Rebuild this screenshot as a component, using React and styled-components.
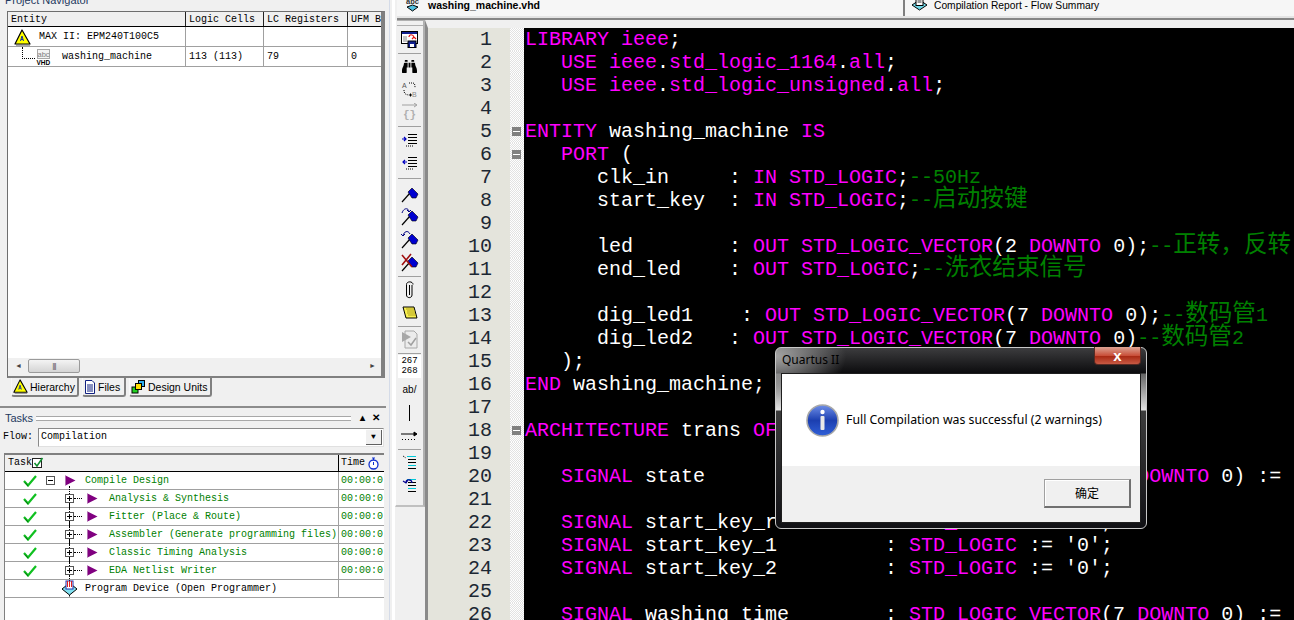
import React from 'react'
import styled, { createGlobalStyle } from 'styled-components'
import { FaBinoculars } from 'react-icons/fa'

const GlobalStyle = createGlobalStyle`
  html, body {
    margin: 0;
    padding: 0;
    background: #f0f0f0;
    overflow: hidden;
  }
  * {
    box-sizing: border-box;
  }
`

const MONO = `'Liberation Mono', 'Noto Sans CJK SC', monospace`
const SANS = `'Liberation Sans', 'Noto Sans CJK SC', sans-serif`

const Page = styled.div`
  position: relative;
  width: 1294px;
  height: 620px;
  overflow: hidden;
  display: grid;
  grid-template-columns: 386px 9px 1fr;
  background: #f0f0f0;
`

/* left column */
const LeftColumn = styled.div`
  display: flex;
  flex-direction: column;
  height: 620px;
  overflow: hidden;
`

const NavTitle = styled.div`
  height: 11px;
  padding-left: 5px;
  font: 11px/14px ${SANS};
  color: #1f3a5f;
  overflow: hidden;

  span {
    display: block;
    margin-top: -7px;
  }
`

const NavBox = styled.div`
  margin-left: 7px;
  width: 378px;
  height: 367px;
  background: #fff;
  border: 1px solid #6e6e6e;
  border-right: 4px solid #808080;
  border-bottom: 2px solid #808080;
  display: flex;
  flex-direction: column;
`

const NavRow = styled.div`
  display: grid;
  grid-template-columns: 178px 78px 84px 1fr;
  height: ${(p) => p.$h}px;
  border-bottom: 1px solid ${(p) => (p.$head ? '#000' : '#a0a0a0')};
  background: ${(p) => (p.$head ? '#f0f0f0' : '#fff')};
  flex: none;
  overflow: hidden;
`

const NavCell = styled.div`
  display: flex;
  align-items: center;
  gap: ${(p) => p.$gap || 0}px;
  padding-left: ${(p) => p.$pad ?? 3}px;
  padding-top: ${(p) => (p.$head ? 2 : 1)}px;
  font: 10px/12px ${MONO};
  color: #000;
  white-space: nowrap;
  overflow: hidden;
  border-right: 1px solid ${(p) => (p.$head ? '#222' : '#a0a0a0')};

  &:last-child {
    border-right: none;
  }
`

const NavSpacer = styled.div`
  flex: 1;
`

const TreeElbow = styled.span`
  width: 13px;
  height: 12px;
  margin-top: -8px;
  border-left: 1px dotted #000;
  border-bottom: 1px dotted #000;
  flex: none;
`

const EntityName = styled.span`
  margin-left: 10px;
`

const ScrollBar = styled.div`
  height: 18px;
  flex: none;
  background: #f0f0f0;
  display: flex;
  align-items: center;
  padding: 0 5px 3px 7px;
  font-size: 7px;
  color: #444;
`

const ScrollThumb = styled.div`
  width: 52px;
  height: 14px;
  margin-left: 6px;
  border: 1px solid #9a9a9a;
  border-radius: 2px;
  background: linear-gradient(180deg, #f4f4f4, #d4d4d4);
  display: flex;
  align-items: center;
  justify-content: center;
  font: 8px/10px ${SANS};
  color: #555;
  letter-spacing: -1px;
`

const ScrollGrow = styled.div`
  flex: 1;
`

const TabRow = styled.div`
  display: flex;
  gap: 3px;
  padding-left: 11px;
  height: 30px;
  flex: none;
  border-bottom: 2px solid #8c8c8c;
`

const PanelTab = styled.div`
  width: ${(p) => p.$w}px;
  height: 19px;
  display: flex;
  align-items: center;
  gap: 2px;
  padding-left: 1px;
  font: 10.5px/14px ${SANS};
  color: #000;
  white-space: nowrap;
  border: 1px solid #f8f8f8;
  border-top: none;
  border-right: 2px solid #808080;
  border-bottom: 2px solid #808080;
  border-radius: 0 0 3px 3px;
`

const TasksHead = styled.div`
  height: 18px;
  flex: none;
  margin-top: 1px;
  display: flex;
  align-items: center;
  padding: 0 4px 0 5px;
  font: 11px/14px ${SANS};
  color: #1f3a5f;
`

const GripLines = styled.div`
  flex: 1;
  height: 5px;
  margin: 0 5px 0 3px;
  border-top: 1px solid #a8a8a8;
  border-bottom: 1px solid #a8a8a8;
  background: #fff;
`

const HeadButton = styled.span`
  width: 13px;
  text-align: center;
  font: bold 10px/12px ${SANS};
  color: #000;
`

const FlowRow = styled.div`
  display: flex;
  align-items: center;
  height: 20px;
  flex: none;
  padding: 0 2px 0 3px;
  font: 10px/12px ${MONO};
`

const FlowLabel = styled.span`
  width: 35px;
  color: #000;
`

const Combo = styled.div`
  flex: 1;
  height: 19px;
  display: flex;
  align-items: center;
  justify-content: space-between;
  padding: 0 1px 0 2px;
  background: #fff;
  border: 1px solid #8a8a8a;
  border-right-color: #e0e0e0;
  border-bottom-color: #e0e0e0;
`

const ComboArrow = styled.span`
  width: 16px;
  height: 15px;
  display: flex;
  align-items: center;
  justify-content: center;
  background: #f0f0f0;
  border-right: 1px solid #606060;
  border-bottom: 1px solid #606060;
  font-size: 8px;
  color: #000;
`

const TaskTable = styled.div`
  margin: 6px 2px 0 4px;
  flex: 1;
  background: #fff;
  border-left: 1px solid #808080;
  border-top: 2px solid #808080;
`

const TaskRow = styled.div`
  display: grid;
  grid-template-columns: 334px 1fr;
  height: ${(p) => (p.$head ? 17 : 18)}px;
  border-bottom: 1px solid ${(p) => (p.$head ? '#000' : '#a0a0a0')};
  background: ${(p) => (p.$head ? '#f0f0f0' : '#fff')};
`

const TaskName = styled.div`
  position: relative;
  display: flex;
  align-items: center;
  padding-left: ${(p) => p.$pad ?? 0}px;
  font: 10px/12px ${MONO};
  color: ${(p) => p.$color || '#000'};
  white-space: nowrap;
  border-right: 1px solid ${(p) => (p.$head ? '#000' : '#a0a0a0')};
`

const TaskLabel = styled.span`
  margin-left: ${(p) => p.$left}px;
`

const TaskTime = styled.div`
  display: flex;
  align-items: center;
  gap: ${(p) => p.$gap || 0}px;
  padding-left: 2px;
  font: 10px/12px ${MONO};
  color: ${(p) => p.$color || '#000'};
  overflow: hidden;
  white-space: nowrap;
`

const Slot = styled.span`
  width: ${(p) => p.$w}px;
  flex: none;
  display: flex;
  align-items: center;
  justify-content: center;
`

const TreeBox = styled.span`
  position: relative;
  width: 9px;
  height: 9px;
  flex: none;
  margin-left: ${(p) => p.$left || 0}px;
  border: 1px solid #555;
  background: #fff;

  &::before {
    content: '';
    position: absolute;
    left: 1px;
    right: 1px;
    top: 3px;
    height: 1px;
    background: #000;
  }

  &::after {
    content: '';
    display: ${(p) => (p.$plus ? 'block' : 'none')};
    position: absolute;
    top: 1px;
    bottom: 1px;
    left: 3px;
    width: 1px;
    background: #000;
  }
`

const TreeDots = styled.span`
  width: 8px;
  height: 1px;
  flex: none;
  margin-right: 5px;
  border-top: 1px dotted #000;
`

const TreeTrunk = styled.span`
  position: absolute;
  left: 64px;
  top: -4px;
  height: 8px;
  border-left: 1px dotted #000;

  & + & {
    top: 13px;
    height: 6px;
  }
`

/* splitter between left column and editor */
const Splitter = styled.div`
  background: #f0f0f0;
  border-right: 3px solid #fff;
  position: relative;

  &::after {
    content: '';
    display: block;
    width: 1px;
    height: 620px;
    margin-left: 3px;
    background: #d4dbe8;
  }
`

/* right column */
const RightColumn = styled.div`
  display: flex;
  flex-direction: column;
  height: 620px;
  overflow: hidden;
`

const TabBar = styled.div`
  height: 20px;
  flex: none;
  display: flex;
  margin-left: 2px;
  background: #f6f6f6;
  border-bottom: 2px solid #858585;
  box-shadow: inset 0 -2px 0 #e4e4e4;
`

const FileTab = styled.div`
  width: ${(p) => p.$w}px;
  height: ${(p) => (p.$active ? 16 : 16)}px;
  flex: none;
  display: flex;
  align-items: flex-start;
  gap: ${(p) => p.$gap}px;
  padding-left: ${(p) => p.$pad}px;
  font: ${(p) => (p.$active ? 'bold 10.5px' : '10.25px')}/11px ${SANS};
  color: #000;
  border-right: ${(p) => (p.$active ? '2px solid #808080' : 'none')};
  white-space: nowrap;
  overflow: hidden;

  svg {
    flex: none;
    margin-top: -3px;
  }
`

const Work = styled.div`
  flex: 1;
  display: flex;
  min-height: 0;
`

const ToolBar = styled.div`
  width: 30px;
  flex: none;
  height: 487px;
  background: #f0f0f0;
  border-right: 2px solid #b0b0b0;
  border-bottom: 2px solid #c0c0c0;
  border-left: 1px solid #fff;
  display: flex;
  flex-direction: column;
  align-items: center;
`

const ToolGrip = styled.div`
  width: 26px;
  height: 6px;
  margin-bottom: 2px;
  border-top: 1px solid #b0b0b0;
  border-bottom: 1px solid #b0b0b0;
  flex: none;
`

const Tool = styled.div`
  width: 24px;
  height: 23px;
  flex: none;
  display: flex;
  align-items: center;
  justify-content: center;
  color: #000;
`

const ToolSep = styled.div`
  width: 23px;
  height: ${(p) => (p.$wide ? 8 : 4)}px;
  flex: none;
  display: flex;
  align-items: center;

  &::after {
    content: '';
    width: 100%;
    height: 1px;
    background: #a0a0a0;
  }
`

const LineCount = styled.div`
  width: 23px;
  height: 23px;
  flex: none;
  background: #fff;
  font: 9px/10px ${MONO};
  color: #000;
  text-align: center;
  padding-top: 1px;
`

const AbLabel = styled.span`
  font: 10px/12px ${SANS};
  color: #000;
`

const Editor = styled.div`
  flex: 1;
  min-width: 0;
  background: #000;
  border-left: 3px solid #8a8a8a;
  border-top: 8px solid #f0f0f0;
  overflow: hidden;
`

const CodeRow = styled.div`
  display: grid;
  grid-template-columns: 82px 14px 1fr;
  height: 23px;
`

const LineNumber = styled.div`
  background: #e4e4dc;
  padding-right: 18px;
  text-align: right;
  font: 20px/23px ${MONO};
  color: #1c2733;
`

const FoldCell = styled.div`
  display: flex;
  align-items: center;
  justify-content: center;
  padding-right: 1px;
  background: repeating-conic-gradient(#fff 0 25%, #e2e2e2 0 50%) 0 0 / 2px 2px;
`

const FoldBox = styled.span`
  width: 9px;
  height: 9px;
  background: #808080;
  display: flex;
  align-items: center;
  justify-content: center;

  &::after {
    content: '';
    width: 7px;
    height: 1px;
    background: #fff;
  }
`

const CodeText = styled.div`
  padding-left: 1px;
  font: 20px/23px ${MONO};
  color: #fff;
  white-space: pre;
`

const Keyword = styled.span`
  color: #ff00ff;
`

const Comment = styled.span`
  color: #008000;
`

const Cjk = styled.span`
  font-size: 23.6px;
  line-height: 20px;
`

/* dialog on top of the editor */
const Dialog = styled.div`
  position: absolute;
  left: 775px;
  top: 347px;
  width: 372px;
  height: 182px;
  padding: 0 5px 5px;
  display: flex;
  flex-direction: column;
  border: 1px solid #c8c8c8;
  border-radius: 6px;
  background:
    radial-gradient(ellipse 70px 45px at 0 8px, #a4a4a4 0, rgba(164, 164, 164, 0) 100%),
    linear-gradient(180deg, #3c3c3e 0, #0c0c0e 25px, #666 26px, #e4e4e4 62px, #3c3c3c 63px, #101014 100%);
`

const DialogTitle = styled.div`
  height: 25px;
  flex: none;
  display: flex;
  justify-content: space-between;
  font: 12px/24px 'Noto Sans', ${SANS};
  color: #000;
  padding-left: 1px;
`

const CloseButton = styled.div`
  width: 47px;
  height: 18px;
  margin-top: -1px;
  display: flex;
  align-items: center;
  justify-content: center;
  border: 1px solid #5a2a22;
  border-top: none;
  border-radius: 0 0 4px 4px;
  background: linear-gradient(180deg, #dca394 0, #c9503a 50%, #a92a14 55%, #c85a44 100%);
  font: bold 15px/16px ${SANS};
  color: #fff;
`

const DialogBody = styled.div`
  flex: 1;
  display: flex;
  flex-direction: column;
  background: #f0f0f0;
  border: 1px solid #1e1e1e;
`

const DialogMessage = styled.div`
  height: 92px;
  flex: none;
  background: #fff;
  display: flex;
  align-items: center;
  gap: 7px;
  padding-left: 24px;
  font: 12.3px/16px 'Noto Sans', ${SANS};
  color: #000;
`

const DialogFoot = styled.div`
  flex: 1;
  display: flex;
  justify-content: flex-end;
  padding: 13px 9px 0 0;
`

const OkButton = styled.div`
  width: 87px;
  height: 29px;
  display: flex;
  align-items: center;
  justify-content: center;
  background: #f0f0f0;
  border: 1px solid #a0a0a0;
  border-right: 2px solid #707070;
  border-bottom: 2px solid #707070;
  box-shadow: inset 1px 1px 0 #fff;
  font: 12px/16px 'Noto Sans CJK SC', sans-serif;
  color: #000;
`

const CODE_LINES = [
  '{LIBRARY ieee};',
  '   {USE ieee}.{std_logic_1164}.{all};',
  '   {USE ieee}.{std_logic_unsigned}.{all};',
  '',
  '{ENTITY} washing_machine {IS}',
  '   {PORT} (',
  '      clk_in     : {IN STD_LOGIC};[--50Hz]',
  '      start_key  : {IN STD_LOGIC};[--启动按键]',
  '',
  '      led        : {OUT STD_LOGIC_VECTOR}(2 {DOWNTO} 0);[--正转，反转]',
  '      end_led    : {OUT STD_LOGIC};[--洗衣结束信号]',
  '',
  '      dig_led1    : {OUT STD_LOGIC_VECTOR}(7 {DOWNTO} 0);[--数码管1]',
  '      dig_led2   : {OUT STD_LOGIC_VECTOR}(7 {DOWNTO} 0)[--数码管2]',
  '   );',
  '{END} washing_machine;',
  '',
  '{ARCHITECTURE} trans {OF} washing_machine {IS}',
  '',
  '   {SIGNAL} state               : {STD_LOGIC_VECTOR}(7 {DOWNTO} 0) := ',
  '',
  "   {SIGNAL} start_key_r         : {STD_LOGIC} := '0';",
  "   {SIGNAL} start_key_1         : {STD_LOGIC} := '0';",
  "   {SIGNAL} start_key_2         : {STD_LOGIC} := '0';",
  '',
  '   {SIGNAL} washing_time        : {STD_LOGIC_VECTOR}(7 {DOWNTO} 0) := ',
]

const FOLD_LINES = [5, 6, 18]

const SUB_TASKS = [
  'Analysis & Synthesis',
  'Fitter (Place & Route)',
  'Assembler (Generate programming files)',
  'Classic Timing Analysis',
  'EDA Netlist Writer',
]

const splitCjk = (text) =>
  text.split(/([\u3000-\u9fff\uff00-\uffef]+)/).map((part, i) =>
    /[\u3000-\u9fff\uff00-\uffef]/.test(part) ? <Cjk key={i}>{part}</Cjk> : part
  )

const renderCode = (line) =>
  line.split(/(\{[^}]*\}|\[[^\]]*\])/).map((part, i) => {
    if (part.startsWith('{')) return <Keyword key={i}>{part.slice(1, -1)}</Keyword>
    if (part.startsWith('[')) return <Comment key={i}>{splitCjk(part.slice(1, -1))}</Comment>
    return part
  })

const Warning = ({ size = 17 }) => (
  <svg width={size} height={size} viewBox="0 0 17 17">
    <path d="M8 1 L16 15 H1 Z" fill="#ffff00" stroke="#000" strokeWidth="1.2" strokeLinejoin="round" />
    <path d="M2 16 H16" stroke="#555" strokeWidth="1" />
    <path d="M6.5 12 L8 7 L9.5 12 M7 10.5 H9" stroke="#1030a0" strokeWidth="1" fill="none" />
  </svg>
)

const VhdIcon = () => (
  <svg width="15" height="17" viewBox="0 0 15 17">
    <rect x="1.5" y="0.5" width="12" height="9" fill="#f4f4f4" stroke="#a8a8a8" />
    <text x="1.5" y="8" fontFamily="Liberation Sans" fontSize="7.5" fill="#808080">abc</text>
    <text x="0.5" y="16" fontFamily="Liberation Sans" fontWeight="bold" fontSize="6.5" fill="#000">VHD</text>
  </svg>
)

const Check = () => (
  <svg width="14" height="12" viewBox="0 0 14 12">
    <path d="M1 6 L5 10.5 L13 1" fill="none" stroke="#10c020" strokeWidth="2.2" />
    <path d="M2 7.5 L5 11" fill="none" stroke="#067010" strokeWidth="1" />
  </svg>
)

const PlayMark = () => (
  <svg width="11" height="11" viewBox="0 0 11 11">
    <path d="M0.5 0.5 L10.5 5.5 L0.5 10.5 Z" fill="#800080" />
    <path d="M0.5 0.5 V10.5" stroke="#b070b0" strokeWidth="1" />
  </svg>
)

const ProgrammerIcon = () => (
  <svg width="17" height="17" viewBox="0 0 17 17">
    <path d="M8.5 3 L16 9 L8.5 15 L1 9 Z" fill="#80e0f0" stroke="#000" strokeWidth="1" />
    <rect x="5" y="1" width="7" height="8" fill="#fff" stroke="#2030b0" />
    <path d="M6.5 1 V7 M8.5 1 V7 M10.5 1 V7" stroke="#e02020" strokeWidth="1" />
    <path d="M8.5 15 V16.5" stroke="#000" />
  </svg>
)

const ReportIcon = () => (
  <svg width="17" height="15" viewBox="0 0 17 15">
    <path d="M8.5 3 L16 8 L8.5 13 L1 8 Z" fill="#70d8e8" stroke="#000" />
    <rect x="5" y="0.5" width="7" height="8" fill="#fff" stroke="#000" />
    <path d="M6.5 3 H10.5 M6.5 5 H10.5" stroke="#333" />
  </svg>
)

const AbcTabIcon = () => (
  <svg width="15" height="15" viewBox="0 0 15 15">
    <path d="M7.5 8 L13 10 L7.5 14 L2 10 Z" fill="#50c0e0" stroke="#000" />
    <text x="1" y="7" fontFamily="Liberation Sans" fontSize="7.5" fill="#333">abc</text>
  </svg>
)

const FilesIcon = () => (
  <svg width="12" height="14" viewBox="0 0 12 14">
    <path d="M1.5 0.5 H8 L10.5 3 V13.5 H1.5 Z" fill="#fff" stroke="#102080" />
    <path d="M3 5 H9 M3 7 H9 M3 9 H9 M3 11 H9" stroke="#102080" />
  </svg>
)

const UnitsIcon = () => (
  <svg width="15" height="14" viewBox="0 0 15 14">
    <rect x="7.5" y="0.5" width="6" height="6" fill="#30b0f0" stroke="#000" />
    <rect x="1" y="7" width="6" height="6" fill="#20d020" stroke="#000" />
    <rect x="4.5" y="3.5" width="6" height="6" fill="#ffe000" stroke="#000" />
  </svg>
)

const TaskBox = () => (
  <svg width="12" height="12" viewBox="0 0 12 12">
    <rect x="0.5" y="1.5" width="9" height="9" fill="#fff" stroke="#222" />
    <path d="M2.5 6 L5 9 L10.5 1" fill="none" stroke="#109030" strokeWidth="1.6" />
  </svg>
)

const Stopwatch = () => (
  <svg width="11" height="13" viewBox="0 0 11 13">
    <circle cx="5.5" cy="7.5" r="4.5" fill="#fff" stroke="#1030d0" strokeWidth="1.3" />
    <path d="M5.5 5 V8 M4 1 H7 M5.5 1 V3" stroke="#1030d0" />
  </svg>
)

const CompileTool = () => (
  <svg width="17" height="17" viewBox="0 0 17 17">
    <rect x="0.5" y="0.5" width="16" height="12" fill="#fff" stroke="#000" />
    <rect x="1" y="1" width="15" height="2" fill="#102090" />
    <path d="M2 6 H6 M2 8 H6 M2 10 H6" stroke="#888" />
    <path d="M8 6 C8 3 12 3 13 6 M11 8 L13 6 L15 8" fill="none" stroke="#e01010" strokeWidth="1.2" />
    <rect x="7" y="10" width="8" height="6.5" fill="#102090" stroke="#000" />
    <rect x="9" y="13" width="4" height="3" fill="#fff" />
  </svg>
)

const SwapTool = () => (
  <svg width="18" height="17" viewBox="0 0 18 17">
    <text x="1" y="7" fontFamily="Liberation Sans" fontSize="7" fill="#555">A</text>
    <text x="11" y="16" fontFamily="Liberation Sans" fontSize="7" fill="#888">B</text>
    <path d="M3 9 C3 13 5 14 9 14 M8 2 H12 C14 2 14 5 14 7" fill="none" stroke="#000" strokeDasharray="1 1" />
    <path d="M9 12 L11 14 L9 16 Z" fill="#000" />
  </svg>
)

const BraceTool = () => (
  <svg width="18" height="19" viewBox="0 0 18 19">
    <path d="M1 2 H15 M13 0 L16 2 L13 4" fill="none" stroke="#a0a0a0" />
    <text x="2" y="15" fontFamily="Liberation Mono" fontSize="11" fontWeight="bold" fill="#b0b0b0">{'{}'}</text>
  </svg>
)

const IndentTool = ({ out }) => (
  <svg width="16" height="14" viewBox="0 0 16 14">
    <path d="M6 1.5 H15 M6 4.5 H15 M6 7.5 H15 M6 10.5 H15" stroke="#000" strokeWidth="1.2" />
    <path d="M4 13 H12" stroke="#000" strokeDasharray="1 1" />
    {out ? (
      <path d="M5 6 H1 M3 4 L1 6 L3 8" fill="none" stroke="#0000c0" strokeWidth="1.2" />
    ) : (
      <path d="M0 6 H4 M2 4 L4 6 L2 8" fill="none" stroke="#0000c0" strokeWidth="1.2" />
    )}
  </svg>
)

const FlagTool = ({ mark }) => (
  <svg width="18" height="19" viewBox="0 0 18 19">
    <path d="M1 18 L9 9" stroke="#000" strokeWidth="1.2" />
    <path d="M7 8 L11 4 L17 10 L15 14 L11 14 Z" fill="#0000d0" stroke="#000" strokeWidth="0.6" />
    {mark === 'next' && <path d="M1 6 C3 0 8 1 8 5 M6 3 L8 5 L10 3" fill="none" stroke="#000080" />}
    {mark === 'prev' && <path d="M9 4 C7 0 3 1 2 6 M0 4 L2 6 L4 4" fill="none" stroke="#000080" />}
    {mark === 'clear' && <path d="M1 2 L11 14 M10 1 L1 12" stroke="#a01010" strokeWidth="1.6" />}
  </svg>
)

const ClipTool = () => (
  <svg width="10" height="18" viewBox="0 0 10 18">
    <path d="M7 4 V14 C7 17.5 1.5 17.5 1.5 14 V3.5 C1.5 0 8 0 8 3.5" fill="none" stroke="#000" />
    <path d="M4.5 4 V14" stroke="#000" />
  </svg>
)

const ScrollTool = () => (
  <svg width="16" height="14" viewBox="0 0 16 14">
    <path d="M1 1 H12 L15 12 H4 Z" fill="#f8f050" stroke="#000" />
    <path d="M4 3 H12 M5 5 H13 M5 7 H13 M6 9 H14" stroke="#b0a020" />
  </svg>
)

const PageTool = () => (
  <svg width="17" height="19" viewBox="0 0 17 19">
    <path d="M4 1 H13 L16 4 V18 H4 Z" fill="#ececec" stroke="#a8a8a8" />
    <path d="M1 2 L10 7 L1 12 Z" fill="#a8a8a8" />
    <path d="M7 12 L10 15 L15 8" fill="none" stroke="#a0a0a0" strokeWidth="1.5" />
  </svg>
)

const ArrowTool = () => (
  <svg width="17" height="11" viewBox="0 0 17 11">
    <path d="M0 4 H15 M13 2 L16 4 L13 6 Z" fill="#000" stroke="#000" />
    <path d="M1 9.5 H16" stroke="#000" strokeDasharray="1 2" />
  </svg>
)

const ListTool = ({ back }) => (
  <svg width="16" height="15" viewBox="0 0 16 15">
    <path d="M5 1.5 H14" stroke="#00c8d8" />
    <path d="M6 4.5 H14 M6 7.5 H14" stroke="#000" />
    <path d="M6 10.5 H14" stroke="#00c8d8" />
    <path d="M6 13.5 H14" stroke="#000" />
    {back ? (
      <path d="M4 4 C4 1 10 1 10 5 M1 3 L4 5 L6 2" fill="none" stroke="#000090" strokeWidth="1.2" />
    ) : (
      <path d="M1 1 L4 3" stroke="#000" strokeDasharray="1 1" />
    )}
  </svg>
)

const InfoIcon = () => (
  <svg width="33" height="33" viewBox="0 0 33 33">
    <defs>
      <linearGradient id="infoBlue" x1="0" y1="0" x2="0" y2="1">
        <stop offset="0" stopColor="#6f8fe8" />
        <stop offset="0.5" stopColor="#1c3fb0" />
        <stop offset="1" stopColor="#3060d8" />
      </linearGradient>
    </defs>
    <circle cx="16.5" cy="16.5" r="15.5" fill="url(#infoBlue)" stroke="#a8a8a8" strokeWidth="1.6" />
    <circle cx="16.5" cy="8" r="2.2" fill="#fff" />
    <rect x="14.5" y="12" width="4" height="14" rx="1" fill="#e8e8e8" />
  </svg>
)

function App() {
  return (
    <Page>
      <GlobalStyle />

      <LeftColumn>
        <NavTitle><span>Project Navigator</span></NavTitle>
        <NavBox>
          <NavRow $head $h={15}>
            <NavCell $head>Entity</NavCell>
            <NavCell $head>Logic Cells</NavCell>
            <NavCell $head>LC Registers</NavCell>
            <NavCell $head>UFM B</NavCell>
          </NavRow>
          <NavRow $h={20}>
            <NavCell $pad={6} $gap={8}><Warning />MAX II: EPM240T100C5</NavCell>
            <NavCell />
            <NavCell />
            <NavCell />
          </NavRow>
          <NavRow $h={20}>
            <NavCell $pad={14} $gap={1}>
              <TreeElbow />
              <VhdIcon />
              <EntityName>washing_machine</EntityName>
            </NavCell>
            <NavCell>113 (113)</NavCell>
            <NavCell>79</NavCell>
            <NavCell>0</NavCell>
          </NavRow>
          <NavSpacer />
          <ScrollBar>
            ◄
            <ScrollThumb>|||</ScrollThumb>
            <ScrollGrow />
            ►
          </ScrollBar>
        </NavBox>

        <TabRow>
          <PanelTab $w={68}><Warning size={15} />Hierarchy</PanelTab>
          <PanelTab $w={44}><FilesIcon />Files</PanelTab>
          <PanelTab $w={83}><UnitsIcon />Design Units</PanelTab>
        </TabRow>

        <TasksHead>
          Tasks
          <GripLines />
          <HeadButton>▴</HeadButton>
          <HeadButton>✕</HeadButton>
        </TasksHead>

        <FlowRow>
          <FlowLabel>Flow:</FlowLabel>
          <Combo>
            Compilation
            <ComboArrow>▼</ComboArrow>
          </Combo>
        </FlowRow>

        <TaskTable>
          <TaskRow $head>
            <TaskName $head $pad={3}>Task<TaskBox /></TaskName>
            <TaskTime $gap={3}>Time<Stopwatch /></TaskTime>
          </TaskRow>
          <TaskRow>
            <TaskName $color="#008000">
              <Slot $w={50}><Check /></Slot>
              <TreeBox $left={-9} />
              <Slot $w={30}><PlayMark /></Slot>
              Compile Design
            </TaskName>
            <TaskTime $color="#008000">00:00:0</TaskTime>
          </TaskRow>
          {SUB_TASKS.map((task) => (
            <TaskRow key={task}>
              <TaskName $color="#008000">
                <TreeTrunk />
                <TreeTrunk />
                <Slot $w={50}><Check /></Slot>
                <TreeBox $left={10} $plus />
                <TreeDots />
                <PlayMark />
                <TaskLabel $left={11}>{task}</TaskLabel>
              </TaskName>
              <TaskTime $color="#008000">00:00:0</TaskTime>
            </TaskRow>
          ))}
          <TaskRow>
            <TaskName>
              <Slot $w={56} />
              <ProgrammerIcon />
              <TaskLabel $left={7}>Program Device (Open Programmer)</TaskLabel>
            </TaskName>
            <TaskTime />
          </TaskRow>
        </TaskTable>
      </LeftColumn>

      <Splitter />

      <RightColumn>
        <TabBar>
          <FileTab $active $w={508} $pad={8} $gap={8}>
            <AbcTabIcon />
            washing_machine.vhd
          </FileTab>
          <FileTab $w={300} $pad={6} $gap={6}>
            <ReportIcon />
            Compilation Report - Flow Summary
          </FileTab>
        </TabBar>

        <Work>
          <ToolBar>
            <ToolGrip />
            <Tool><CompileTool /></Tool>
            <ToolSep />
            <Tool><FaBinoculars size={15} /></Tool>
            <Tool><SwapTool /></Tool>
            <Tool><BraceTool /></Tool>
            <ToolSep />
            <Tool><IndentTool /></Tool>
            <Tool><IndentTool out /></Tool>
            <ToolSep $wide />
            <Tool><FlagTool /></Tool>
            <Tool><FlagTool mark="next" /></Tool>
            <Tool><FlagTool mark="prev" /></Tool>
            <Tool><FlagTool mark="clear" /></Tool>
            <ToolSep />
            <Tool><ClipTool /></Tool>
            <Tool><ScrollTool /></Tool>
            <ToolSep />
            <Tool><PageTool /></Tool>
            <ToolSep />
            <LineCount>267<br />268</LineCount>
            <Tool><AbLabel>ab/</AbLabel></Tool>
            <Tool>
              <svg width="3" height="16" viewBox="0 0 3 16"><path d="M1.5 0 V16" stroke="#000" /></svg>
            </Tool>
            <Tool><ArrowTool /></Tool>
            <ToolSep />
            <Tool><ListTool /></Tool>
            <Tool><ListTool back /></Tool>
          </ToolBar>

          <Editor>
            {CODE_LINES.map((line, i) => (
              <CodeRow key={i}>
                <LineNumber>{i + 1}</LineNumber>
                <FoldCell>{FOLD_LINES.includes(i + 1) && <FoldBox />}</FoldCell>
                <CodeText>{renderCode(line)}</CodeText>
              </CodeRow>
            ))}
          </Editor>
        </Work>
      </RightColumn>

      <Dialog>
        <DialogTitle>
          Quartus II
          <CloseButton>x</CloseButton>
        </DialogTitle>
        <DialogBody>
          <DialogMessage>
            <InfoIcon />
            Full Compilation was successful (2 warnings)
          </DialogMessage>
          <DialogFoot>
            <OkButton>确定</OkButton>
          </DialogFoot>
        </DialogBody>
      </Dialog>
    </Page>
  )
}

export default App
